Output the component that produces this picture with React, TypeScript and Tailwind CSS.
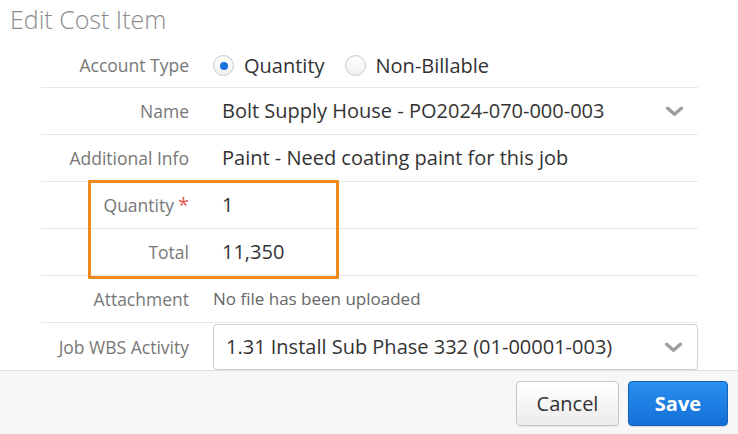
import React from 'react';

const FONT = { fontFamily: '"Open Sans", "Noto Sans", sans-serif' };

function Chevron() {
  return (
    <svg viewBox="0 0 20 12" className="h-[11px] w-[19px]" aria-hidden>
      <polyline points="2.5,2.5 10,9 17.5,2.5" fill="none" stroke="#9e9e9e" strokeWidth="3.8" strokeLinecap="round" strokeLinejoin="round" />
    </svg>
  );
}

function Radio({ checked, label }: { checked?: boolean; label: string }) {
  return (
    <label className="flex items-center gap-[10px]">
      <span className="grid h-[21px] w-[21px] place-items-center rounded-full border border-[#c9c9c9] bg-gradient-to-b from-white to-[#f1f1f1] shadow-[inset_0_1px_1px_rgba(0,0,0,0.05)]">
        {checked && <span className="h-[8px] w-[8px] rounded-full bg-[#1a73d9]" />}
      </span>
      <span className="text-[20px] text-[#333]">{label}</span>
    </label>
  );
}

function Row({
  label,
  required,
  first,
  children,
}: {
  label: string;
  required?: boolean;
  first?: boolean;
  children: React.ReactNode;
}) {
  return (
    <div className={`flex items-center border-b border-[#e8e8e8] ${first ? 'h-[48px] pt-[4px]' : 'h-[47px]'}`}>
      <div className="w-[148px] shrink-0 text-right text-[17.5px] text-[#777]">
        {label}
        {required && <span className="ml-[4px] text-[20px] leading-none text-[#e05a4f]">*</span>}
      </div>
      <div className="ml-[24px] flex min-w-0 flex-1 items-center">{children}</div>
    </div>
  );
}

export default function App() {
  return (
    <div className="flex h-[434px] w-[738px] flex-col overflow-hidden bg-white" style={FONT}>
      <div className="relative h-[370px] shrink-0 overflow-hidden">
        <div className="h-[40px] pl-[10px] text-[25px] font-light leading-[38px] text-[#8c8c8c]">
          Edit Cost Item
        </div>

        <div className="ml-[41px] w-[657px]">
          <Row label="Account Type" first>
            <div className="flex items-center gap-[20px]">
              <Radio checked label="Quantity" />
              <Radio label="Non-Billable" />
            </div>
          </Row>
          <Row label="Name">
            <div className="flex flex-1 items-center justify-between pl-[9px] pr-[14px]">
              <span className="text-[20px] text-[#333]">Bolt Supply House - PO2024-070-000-003</span>
              <Chevron />
            </div>
          </Row>
          <Row label="Additional Info">
            <span className="pl-[9px] text-[20px] text-[#333]">Paint - Need coating paint for this job</span>
          </Row>
          <Row label="Quantity" required>
            <span className="pl-[9px] text-[20px] text-[#333]">1</span>
          </Row>
          <Row label="Total">
            <span className="pl-[9px] text-[20px] text-[#333]">11,350</span>
          </Row>
          <Row label="Attachment">
            <span className="text-[17px] text-[#666]">No file has been uploaded</span>
          </Row>
          <div className="flex h-[47px] items-start">
            <div className="w-[148px] shrink-0 pt-[11px] text-right text-[17.5px] text-[#777]">Job WBS Activity</div>
            <div className="ml-[24px] mt-[1px] flex h-[46px] flex-1 items-center justify-between rounded-[4px] border border-[#cfcfcf] pl-[12px] pr-[14px] shadow-[0_1px_1px_rgba(0,0,0,0.06)]">
              <span className="text-[20px] text-[#333]">1.31 Install Sub Phase 332 (01-00001-003)</span>
              <Chevron />
            </div>
          </div>
        </div>

        {/* highlight over quantity/total */}
        <div className="pointer-events-none absolute left-[88px] top-[180px] h-[99px] w-[251px] rounded-[1px] border-[3px] border-[#ef8a1e]" />
      </div>

      <div className="flex flex-1 items-start justify-end gap-[9px] border-t border-[#e2e2e2] bg-[#f7f7f7] pr-[10px] pt-[10px]">
        <button className="h-[45px] w-[103px] rounded-[4px] border border-[#c8c8c8] bg-gradient-to-b from-white to-[#ececec] text-[20px] text-[#333] shadow-[0_1px_1px_rgba(0,0,0,0.08)]">
          Cancel
        </button>
        <button className="h-[45px] w-[100px] rounded-[4px] border border-[#1263b8] bg-gradient-to-b from-[#2a8ff0] to-[#136fd6] text-[20px] font-bold text-white shadow-[0_1px_1px_rgba(0,0,0,0.12)]">
          Save
        </button>
      </div>
    </div>
  );
}
